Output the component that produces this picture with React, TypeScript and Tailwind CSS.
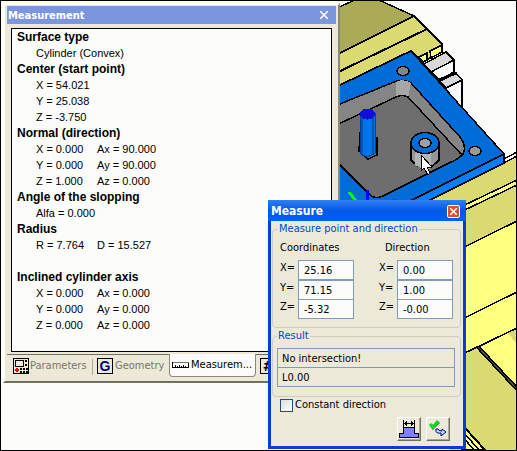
import React from "react";

const tahoma = "font-['DejaVu_Sans_Condensed','DejaVu_Sans',sans-serif]";

function Scene() {
  return (
    <svg
      className="absolute left-0 top-0"
      width="517"
      height="451"
      viewBox="0 0 517 451"
      shapeRendering="crispEdges"
      stroke="#000"
      strokeWidth="1.5"
      strokeLinejoin="round"
      aria-label="Machined part with a pocket, a pin and a boss"
    >
      {/* vise body, far side */}
      <path d="M330 11 355 0H379L414 16 330 58Z" fill="#abab57" />
      <path d="M330 58 414 16 427 29 330 76Z" fill="#dada70" />
      <path d="M330 76 427 29 442 44V52L422 62 411 51 330 90Z" fill="#dada70" strokeWidth="2" />
      <path d="M419 57 427 53V60L423 62Z" fill="#ffff80" />
      <path d="M430 51 442 45V52L431 58Z" fill="#ffff80" />
      {/* jaw steps */}
      <path d="M424 64 446 52 454 60V72L439 80Z" fill="#fafafa" />
      <path d="M424 64 446 52 454 60 431 72Z" fill="#d8d8d8" />
      <path d="M440 81 456 73 462 80V110Z" fill="#fafafa" />
      <path d="M440 81 456 73 462 80 446 88Z" fill="#d8d8d8" />
      <path d="M439 80 456 73" strokeWidth="3" />
      {/* vise body, near side */}
      <path d="M430 200 504 163 517 157V451H450V200Z" fill="#dada70" stroke="none" />
      <path d="M430 200 504 163 517 156M504 159 517 152" fill="none" />
      <path d="M450 212 517 180V185L450 217Z" fill="#ffff80" />
      <path d="M450 254 517 221V292L450 325Z" fill="#ffff80" />
      <path d="M450 325 517 292V328L450 360Z" fill="#ffff80" />
      <path d="M478 347 517 328V389Z" fill="#ffff80" />
      <path d="M508 333 517 329V344Z" fill="#dada70" stroke="none" />
      <path d="M478 347 517 389" strokeWidth="4" />
      <path d="M478 347 517 389" stroke="#55552b" strokeWidth="1" />
      <path d="M465 428 485 450H462V428Z" fill="#ffff80" strokeWidth="2" />
      <path d="M465 434 479 450M463 437 474 450" />
      {/* plate */}
      <path d="M330 90 411 51 504 154V163L426 202H330Z" fill="#0080ff" />
      <path d="M330 90 411 51 504 154 408 202H330Z" fill="#006cd8" />
      <path d="M330 108 394 82Q403 78 411 83L460 137Q467 146 463 154 459 159 449 163L383 196Q375 200 369 194L330 155Z" fill="#858585" />
      <path d="M396 82Q403 78 411 83L408 97Q402 94 396 97Z" fill="#a7a7a7" stroke="none" />
      <path d="M330 128 396 97Q402 94 408 97L460 153 463 154Q459 159 449 163L383 196Q375 200 369 194L330 155Z" fill="#6e6e6e" />
      <ellipse cx="403" cy="71" rx="6" ry="4.5" fill="#858585" />
      <ellipse cx="475" cy="151" rx="6" ry="4.5" fill="#999" />
      {/* pin */}
      <path d="M360 133 359 151 368 159 377 155V138Z" fill="#6e6e6e" />
      <path d="M360 113V153Q367 160 375 153V113Z" fill="#0074e8" strokeWidth="1" stroke="#003f9c" />
      <path d="M361 116V153H363V116ZM372 116V154H374V116Z" fill="#0056b0" stroke="none" />
      <ellipse cx="367.500" cy="114" rx="7.500" ry="5.500" fill="#1010d8" stroke="none" />
      {/* boss */}
      <path d="M411 143V160Q425 176 439 160V143Z" fill="#969696" />
      <path d="M415 153V165Q425 171 431 168V153Z" fill="#b5b5b5" stroke="none" />
      <ellipse cx="425" cy="143" rx="14" ry="10.500" fill="#006cd8" />
      <ellipse cx="425" cy="143" rx="6" ry="4.500" fill="#a0a0a0" />
      {/* axes */}
      <path d="M349 192 356 201" stroke="#0f0" strokeWidth="3" />
      <path d="M367 190V201" stroke="#00f" strokeWidth="3" />
      <path d="M392 200H397" stroke="#f00" strokeWidth="3" />
      {/* pointer */}
      <path d="M421 155V171L424 168 428 175 430 173 427 167H432Z" fill="#fff" strokeWidth="1" />
    </svg>
  );
}

const report = [
  { title: "Surface type", rows: [["Cylinder (Convex)"]] },
  { title: "Center (start point)", rows: [["X = 54.021"], ["Y = 25.038"], ["Z = -3.750"]] },
  {
    title: "Normal (direction)",
    rows: [["X = 0.000", "Ax = 90.000"], ["Y = 0.000", "Ay = 90.000"], ["Z = 1.000", "Az = 0.000"]],
  },
  { title: "Angle of the slopping", rows: [["Alfa = 0.000"]] },
  { title: "Radius", rows: [["R = 7.764", "D = 15.527"]] },
  {
    title: "Inclined cylinder axis",
    rows: [["X = 0.000", "Ax = 0.000"], ["Y = 0.000", "Ay = 0.000"], ["Z = 0.000", "Az = 0.000"]],
  },
];

function ParametersIcon() {
  return (
    <svg className="shrink-0" width="16" height="16" viewBox="0 0 16 16" shapeRendering="crispEdges" aria-hidden="true">
      <path d="M0 0H16V16H0Z" />
      <path d="M1 1H15V15H1Z" fill="#ece9d8" />
      <path d="M2 2H11V9H2ZM12 2H14V4H12ZM12 6H14V8H12Z" />
      <path d="M3 3H10V8H3Z" fill="#ece9d8" />
      <path d="M7 10H9V12H7ZM10 10H12V12H10ZM13 10H15V12H13ZM7 13H9V15H7ZM10 13H12V15H10ZM13 13H15V15H13Z" />
      <path d="M3 10H5V11H6V13H5V14H3V13H2V11H3Z" fill="#f00" />
    </svg>
  );
}

function RulerIcon() {
  return (
    <svg className="shrink-0" width="17" height="6" viewBox="0 0 17 6" shapeRendering="crispEdges" aria-hidden="true">
      <path d="M0 0H17V6H0Z" />
      <path d="M1 1H16V5H1Z" fill="#fff" />
      <path d="M3 3V5M5 4V5M7 3V5M9 4V5M11 3V5M13 4V5" stroke="#000" transform="translate(.5)" />
      <path d="M1 0H17V1H1Z" fill="#777" />
    </svg>
  );
}

function MeasurementWindow() {
  return (
    <section className="absolute left-[3px] top-[3px] flex w-[337px] flex-col border-2 border-t-[#fffef8] border-l-[#fffef8] border-r-[#8c887b] border-b-[#716f64] bg-[#ece9d8] pt-px pl-0.5 pr-0.5">
      <header className={`flex h-[18px] items-center justify-between bg-[#7b96df] pl-px pr-1 text-white ${tahoma}`}>
        <h1 className="pt-px text-[11px] leading-4 font-bold">Measurement</h1>
        <button aria-label="Close panel" className="flex size-4 items-center justify-center">
          <svg width="8" height="8" viewBox="0 0 8 8" stroke="#fff" strokeWidth="1.500">
            <path d="M0 0 8 8M8 0 0 8" />
          </svg>
        </button>
      </header>
      <div className="mx-1 mt-1 h-[324px] border border-black bg-[#fcfcfa] pl-[5px] font-['Liberation_Sans',Arial,sans-serif] text-[11px] leading-4 text-black">
        {report.map((group) => (
          <section key={group.title} className="last:mt-4">
            <h2 className="text-xs leading-4 font-bold">{group.title}</h2>
            {group.rows.map((row) => (
              <div key={row[0]} className="flex pl-[19px]">
                <span className={row.length > 1 ? "w-[61px]" : ""}>{row[0]}</span>
                {row[1] && <span>{row[1]}</span>}
              </div>
            ))}
          </section>
        ))}
      </div>
      <nav className={`mt-0.5 flex h-[27px] items-start border-t border-[#716f64] text-[11px] text-[#77756a] ${tahoma}`}>
        <button className="flex h-[22px] w-[85px] items-center gap-px pl-1.5">
          <ParametersIcon />
          Parameters
        </button>
        <span className="mt-1 h-4 w-px bg-[#aca899]" />
        <button className="flex h-[22px] w-[76px] items-center gap-0.5 pl-1">
          <span className="flex size-4 items-center justify-center border border-black font-['Liberation_Sans',Arial,sans-serif] text-sm leading-3 font-bold text-[#000080]">
            G
          </span>
          Geometry
        </button>
        <button className="-mt-px flex h-[23px] w-[87px] items-center gap-0.5 rounded-b-sm border-x border-b border-[#8c887b] bg-[#fcfcfa] pl-0.5 text-black">
          <RulerIcon />
          Measurem...
        </button>
        <button aria-label="Numbering" className="flex h-[22px] items-center pl-1 text-black">
          <span className="flex size-4 items-center justify-center border border-black text-sm leading-3 font-bold">#</span>
        </button>
      </nav>
    </section>
  );
}

const columns = [
  { title: "Coordinates", values: [["X=", "25.16"], ["Y=", "71.15"], ["Z=", "-5.32"]] },
  { title: "Direction", values: [["X=", "0.00"], ["Y=", "1.00"], ["Z=", "-0.00"]] },
];

const toolButton =
  "flex size-6 items-center justify-center border border-t-white border-l-white border-r-[#716f64] border-b-[#716f64] bg-[#ece9d8] shadow-[inset_-1px_-1px_0_#aca899]";

function MeasureDialog() {
  return (
    <section
      role="dialog"
      aria-labelledby="measure-title"
      className={`absolute left-[268px] top-[200px] w-[198px] rounded-t-sm border-[3px] border-t-0 border-[#0a3bd8] bg-[#ece9d8] text-[11px] leading-4 text-black ${tahoma}`}
    >
      <header className="-mx-[3px] flex h-[21px] items-center justify-between bg-linear-to-b from-[#2f7ff5] via-[#0058e6] to-[#0060f8] pl-[3px] pr-1.5">
        <h1 id="measure-title" className="pt-px text-xs leading-4 font-bold text-white">Measure</h1>
        <button
          aria-label="Close dialog"
          className="mt-px flex size-[13px] items-center justify-center rounded-xs border border-white bg-[#d9532f]"
        >
          <svg width="7" height="7" viewBox="0 0 7 7" stroke="#fff" strokeWidth="1.500">
            <path d="M0 0 7 7M7 0 0 7" />
          </svg>
        </button>
      </header>
      <div className="flex flex-col pl-px pr-0.5 pb-[5px]">
        <fieldset className="h-[107px] min-w-0 rounded-[4px] border border-[#cfcdbc] px-[7px]">
          <legend className="-ml-0.5 px-px text-[#0046d5]">Measure point and direction</legend>
          <div className="mt-[3px] flex justify-between">
            {columns.map((column) => (
              <div key={column.title}>
                <h2 className={column.title === "Direction" ? "pl-1.5" : ""}>{column.title}</h2>
                <div className="mt-1">
                  {column.values.map(([label, value]) => (
                    <label key={label} className="flex h-[19px] items-start first:h-5">
                      <span className="w-[18px] shrink-0">{label}</span>
                      <input
                        defaultValue={value}
                        className="-mb-px h-5 w-14 shrink-0 border border-[#7f9db9] bg-[#fcfcfa] pl-[5px]"
                      />
                    </label>
                  ))}
                </div>
              </div>
            ))}
          </div>
        </fieldset>
        <fieldset className="h-[69px] min-w-0 rounded-[4px] border border-[#cfcdbc] pl-1 pr-[5px]">
          <legend className="px-px text-[#0046d5]">Result</legend>
          <input
            readOnly
            aria-label="Intersection"
            value="No intersection!"
            className="mt-1 block h-5 w-full border border-[#7f9db9] pl-1"
          />
          <input
            readOnly
            aria-label="Length"
            value="L0.00"
            className="-mt-px block h-5 w-full border border-[#7f9db9] pl-1"
          />
        </fieldset>
        <label className="flex items-center gap-0.5 pl-2">
          <input
            type="checkbox"
            className="size-[13px] appearance-none border border-[#1c5180] bg-linear-to-br from-[#dcdcd7] to-white"
          />
          Constant direction
        </label>
        <div className="mt-1 flex justify-end gap-[5px] pr-[11px]">
          <button aria-label="Measure distance" className={toolButton}>
            <svg className="shrink-0" width="20" height="20" viewBox="0 0 20 20" shapeRendering="crispEdges">
              <path d="M4.500 8.500H15.500V14.500H19.500V18.500H.5V14.500H4.500Z" fill="#8080ff" stroke="#000" />
              <path d="M4.500 1V8M15.500 1V8M5 4.500H15" stroke="#000" />
              <path d="M5 4H6V3H7V2H8V7H7V6H6V5H5ZM15 4H14V3H13V2H12V7H13V6H14V5H15Z" />
            </svg>
          </button>
          <button aria-label="Apply" className={toolButton}>
            <svg className="shrink-0" width="20" height="20" viewBox="0 0 20 20">
              <path d="M3 6 5 9 11 3" fill="none" stroke="#777" strokeWidth="3" />
              <path d="M2 5 5 8 10 2" fill="none" stroke="#00e020" strokeWidth="3" />
              <path d="M8 10Q7 15 13 14V17L18 13 14 10V12Q10 12 10 10Z" fill="#b8e8ff" stroke="#000080" />
            </svg>
          </button>
        </div>
      </div>
    </section>
  );
}

export default function App() {
  return (
    <main className="relative min-h-screen w-full overflow-hidden bg-[#fcfcfa]">
      <Scene />
      <MeasurementWindow />
      <MeasureDialog />
      <div className="pointer-events-none absolute inset-0 border border-black" />
    </main>
  );
}
